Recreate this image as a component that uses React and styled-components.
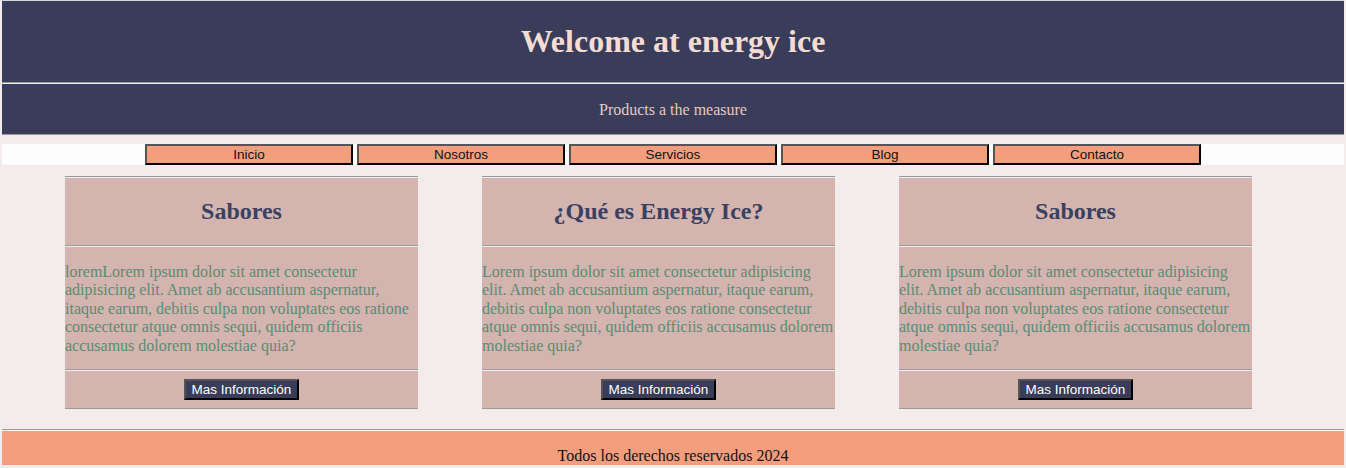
import React from "react";
import styled, { createGlobalStyle } from "styled-components";

const GlobalStyle = createGlobalStyle`
  body {
    margin: 0;
    padding: 0 2px;
    background: #f4ecec;
    font-family: "Liberation Serif", "Times New Roman", serif;
  }
`;

const Page = styled.div`
  display: flex;
  flex-direction: column;
`;

const Rule = styled.div`
  height: 0;
  border-top: 1px solid ${(p) => p.top || "#9a9a9a"};
  border-bottom: 1px solid ${(p) => p.bottom || "#eeeeee"};
`;

const Header = styled.header`
  background: #393d59;
  border-top: 1px solid #d4d4d8;
  border-bottom: 1px solid #9a9a9a;
  text-align: center;
`;

const Title = styled.h1`
  margin: 0;
  height: 81px;
  display: flex;
  align-items: center;
  justify-content: center;
  font-size: 32px;
  font-weight: bold;
  color: #f4dcd2;
`;

const Subtitle = styled.p`
  margin: 0;
  height: 50px;
  padding-top: 2px;
  box-sizing: border-box;
  display: flex;
  align-items: center;
  justify-content: center;
  font-size: 16px;
  color: #e6c8c2;
`;

const Nav = styled.nav`
  margin-top: 9px;
  background: #fdfdfd;
  display: flex;
  justify-content: center;
  gap: 4px;
`;

const NavButton = styled.button`
  width: 208px;
  height: 21px;
  padding: 0;
  background: #f59e7e;
  border: 2px outset #555555;
  border-right-color: #000;
  border-bottom-color: #000;
  font-family: "Liberation Sans", Arial, sans-serif;
  font-size: 13.5px;
  color: #111;
  line-height: 16px;
`;

const Cards = styled.main`
  display: flex;
  gap: 64px;
  padding-left: 63px;
  margin-top: 11px;
`;

const Card = styled.section`
  width: 353px;
  background: #d3b4ae;
  display: flex;
  flex-direction: column;
`;

const CardTitle = styled.h2`
  margin: 0;
  height: 67px;
  display: flex;
  align-items: center;
  justify-content: center;
  font-size: 24px;
  font-weight: bold;
  color: #3a4160;
`;

const CardText = styled.p`
  margin: 0;
  padding: 16px 0 14px;
  font-size: 16px;
  line-height: 18.4px;
  color: #5a8c74;
`;

const CardFooter = styled.div`
  display: flex;
  justify-content: center;
  padding: 8px 0;
`;

const MoreButton = styled.button`
  height: 21px;
  padding: 0 6px;
  background: #393d59;
  color: #ffffff;
  border: 2px outset #555555;
  border-right-color: #000;
  border-bottom-color: #000;
  font-family: "Liberation Sans", Arial, sans-serif;
  font-size: 13.5px;
  line-height: 15px;
`;

const Footer = styled.footer`
  margin-top: 19px;
  border-top: 1px solid #9a9a9a;
`;

const FooterBody = styled.div`
  border-top: 1px solid #fafafa;
  background: #f59e7e;
  height: 34px;
  display: flex;
  align-items: flex-end;
  justify-content: center;
  font-size: 16px;
  color: #111;
  line-height: 18px;
`;

const links = ["Inicio", "Nosotros", "Servicios", "Blog", "Contacto"];

const text =
  "Lorem ipsum dolor sit amet consectetur adipisicing elit. Amet ab accusantium aspernatur, itaque earum, debitis culpa non voluptates eos ratione consectetur atque omnis sequi, quidem officiis accusamus dolorem molestiae quia?";

const cards = [
  { title: "Sabores", body: "lorem" + text },
  { title: "¿Qué es Energy Ice?", body: text },
  { title: "Sabores", body: text },
];

export default function App() {
  return (
    <Page>
      <GlobalStyle />
      <Header>
        <Title>Welcome at energy ice</Title>
        <Rule top="#9a9a9a" bottom="#f0f0f0" />
        <Subtitle>Products a the measure</Subtitle>
      </Header>
      <Nav>
        {links.map((l) => (
          <NavButton key={l}>{l}</NavButton>
        ))}
      </Nav>
      <Cards>
        {cards.map((c, i) => (
          <Card key={i}>
            <Rule />
            <CardTitle>{c.title}</CardTitle>
            <Rule />
            <CardText>{c.body}</CardText>
            <Rule />
            <CardFooter>
              <MoreButton>Mas Información</MoreButton>
            </CardFooter>
            <Rule bottom="#f4ecec" />
          </Card>
        ))}
      </Cards>
      <Footer>
        <FooterBody>Todos los derechos reservados 2024</FooterBody>
      </Footer>
    </Page>
  );
}
